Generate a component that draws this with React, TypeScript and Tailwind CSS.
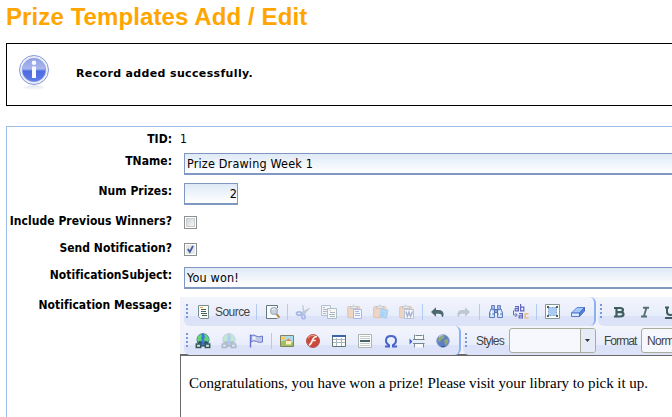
import React from "react";

type KidProps = { children?: React.ReactNode; className?: string };

function Icon({ children, className = "" }: KidProps) {
  return (
    <svg viewBox="0 0 16 16" width="16" height="16" fill="none" className={"block shrink-0 " + className}>
      {children}
    </svg>
  );
}

function Sep({ className = "" }: { className?: string }) {
  return <span className={"block h-4 w-px shrink-0 bg-[#b1cbf3] " + className} />;
}

function Grip({ className = "" }: { className?: string }) {
  return (
    <svg viewBox="0 0 2 15" width="2" height="15" shapeRendering="crispEdges" className={"block shrink-0 " + className}>
      {[0, 4, 8, 12].map((y) => (
        <rect key={y} x="0" y={y} width="2" height="2" fill="#7b98dc" />
      ))}
    </svg>
  );
}

function Source({ className }: KidProps) {
  return (
    <Icon className={className}>
      <path d="M2.5 1.5h10v13h-8l-2-2z" fill="#fdfdf8" stroke="#789094" />
      <path d="M4 3.5h3" stroke="#f0a648" />
      <path d="M5 5.5h5M5 7.5h5M5 9.5h6M6 11.5h5" stroke="#45605f" />
    </Icon>
  );
}

function Preview({ className }: KidProps) {
  return (
    <Icon className={className}>
      <path d="M12.5 4V1.5h-11v13h11" fill="#f9fbff" stroke="#64777c" />
      <circle cx="9" cy="7" r="3.4" fill="#c8d2df" stroke="#a3b3bf" strokeWidth="1.2" />
      <path d="M7 6q1-2 3-1" stroke="#f8fbff" />
      <path d="m11.5 10 3 3.6" stroke="#b78a50" strokeWidth="2" />
    </Icon>
  );
}

function Cut({ className }: KidProps) {
  return (
    <Icon className={className}>
      <path d="M7.8 1 8 8l2 2 1-1.4L9 7.5zM14.5 4l-7 4-1.6 2 2 .4 5-4z" fill="#c4cdd9" stroke="#bac4d2" strokeWidth=".6" />
      <ellipse cx="4" cy="9.5" rx="2.5" ry="1.7" stroke="#a5b7e8" strokeWidth="1.7" />
      <ellipse cx="8.5" cy="12.8" rx="1.6" ry="2" stroke="#a5b7e8" strokeWidth="1.6" />
    </Icon>
  );
}

function Copy({ className }: KidProps) {
  return (
    <Icon className={className}>
      <path d="M.5 1.5h9v10h-9z" fill="#f3f5fa" stroke="#b6c0ca" />
      <path d="M2 3.5h2M2 5.5h4M2 7.5h4M2 9.5h3" stroke="#aebbc5" />
      <path d="M6.5 4.5h9v10h-9z" fill="#f7f8fa" stroke="#b0bec7" />
      <path d="M8 6.5h2" stroke="#edcba1" />
      <path d="M9 8.5h5M8 10.5h6M9 12.5h5" stroke="#aab8c1" />
    </Icon>
  );
}

function Clipboard() {
  return (
    <>
      <rect x=".7" y="2.7" width="12" height="11" rx="1" fill="#eed6c3" stroke="#dec3ae" />
      <path d="M3.5 4.5v-2h2l1-1.5 2 1.5h2v2z" fill="#e5e5e6" stroke="#bcc1c8" strokeWidth=".8" />
    </>
  );
}

function Paste({ className }: KidProps) {
  return (
    <Icon className={className}>
      <Clipboard />
      <path d="M6.5 5.5h8v9h-8z" fill="#f5f7ff" stroke="#aab7e6" />
      <path d="M8 7.5h4M8 9.5h5M8 11.5h5" stroke="#a9b8e5" />
    </Icon>
  );
}

function PasteText({ className }: KidProps) {
  return (
    <Icon className={className}>
      <Clipboard />
      <path d="m8 5 7 1-1.5 8.5-7-2z" fill="#a9d2f3" stroke="#b5d5f1" />
      <path d="m8.5 7 4 .5-1 5" stroke="#c0e0f8" />
    </Icon>
  );
}

function PasteWord({ className }: KidProps) {
  return (
    <Icon className={className}>
      <Clipboard />
      <path d="M5.5 5.5h9v9h-9z" fill="#f6f8fc" stroke="#b6c2d6" />
      <path d="m7 7.5 1.4 5L10 8l1.6 4.5 1.9-5" stroke="#a6b5d1" strokeWidth="1.4" />
    </Icon>
  );
}

function Arrow({ className, flip = false }: KidProps & { flip?: boolean }) {
  return (
    <Icon className={className}>
      <g transform={flip ? "translate(16 0) scale(-1 1)" : undefined} fill={flip ? "#bdc8d5" : "#4d6870"}>
        <path d="M2 8 7 3.2V6h2.5C13 6 14.6 8 14.6 10.500 14.600 12 14 13 13 13.300 13 10.800 12 9.800 9.500 9.800H7v2.900z" />
      </g>
    </Icon>
  );
}

function Find({ className }: KidProps) {
  return (
    <Icon className={className}>
      <path d="M3.5 1.5h3v4h-3zM9.5 1.5h3v4h-3z" fill="#9cbaf0" stroke="#6c83bd" />
      <path d="m3 5-1.5 4v4.500h5V6zM13 5l1.5 4v4.500h-5V6z" fill="#d4e4fc" stroke="#5b7cc0" />
      <path d="M6.5 5.500h3v3h-3zM2 10h4m4 0h4" fill="#87a5df" stroke="#5570b0" />
      <path d="M3.500 7v4M11.500 7v4" stroke="#f8fcff" strokeWidth="1.3" />
    </Icon>
  );
}

function Replace({ className }: KidProps) {
  return (
    <svg viewBox="0 0 18 16" width="18" height="16" className={"block shrink-0 " + className}>
      <g fill="none" strokeWidth="1.200">
        <path d="M3 2.600h3.400v4.900M6.400 4.700H3.200v2.200h3.200M8.600 0v6.900h3.200V3.200H8.600" stroke="#6265be" />
        <path d="M7 9.600h3.400v5M10.400 11.800H7.200v2.200h3.200" stroke="#6265be" />
        <path d="M16.500 9.800h-3.400V14h3.400" stroke="#edae51" />
        <path d="M1.500 6.500V11h3.200M3.300 9l2 2-2 2" stroke="#5b6fc1" strokeWidth="1" />
      </g>
    </svg>
  );
}

function SelectAll({ className }: KidProps) {
  return (
    <Icon className={className}>
      <path d="M.5.5h14v14H.5z" fill="#fbfcf8" stroke="#849796" />
      <path d="M3.500 3.500h8v8h-8z" fill="#a9cbf5" stroke="#82a4d2" strokeDasharray="2 1" />
      <path d="M2 2h2v2H2zM11 2h2v2h-2zM2 11h2v2H2zM11 11h2v2h-2z" fill="#47636a" />
    </Icon>
  );
}

function Eraser({ className }: KidProps) {
  return (
    <Icon className={className}>
      <path d="M1.500 9 7 3.500h7.500L9.500 9z" fill="#a5c7fa" stroke="#5a83da" />
      <path d="M1.500 9h8v3.500h-8z" fill="#dcecff" stroke="#5679cd" />
      <path d="m9.500 9 5-5.500V7l-5 5.500z" fill="#5583dd" stroke="#4269c0" />
    </Icon>
  );
}

function LinkGlobe({ className }: KidProps) {
  return (
    <Icon className={className}>
      <circle cx="8" cy="6.700" r="6" fill="#3d78df" stroke="#4269a8" />
      <path d="M3 3.200 6 1l1 2-1 2 1 2-3 3-2-3zM9 1l3 1 2 4-1 4-3-1-1-3 1-2z" fill="#62d66f" />
      <path d="M1.300 11h4.400v3.500H1.300zM10.300 11h4.400v3.500h-4.400z" fill="#d6e4de" stroke="#34575c" strokeWidth="1.500" />
      <path d="M5 12.800h6M3 10l2-1.300 2 1.800M9 10.500l2-1.800 2 1.300" stroke="#34575c" strokeWidth="1.500" />
    </Icon>
  );
}

function Flag({ className }: KidProps) {
  return (
    <Icon className={className}>
      <path d="M1.500 1.500v13" stroke="#6670cc" strokeWidth="1.400" />
      <path d="M2 2.500q3-1.200 5 .5t6.500 0v6Q10 10 7.500 8.500T2 8.800z" fill="#c1cce8" stroke="#6a78cb" />
      <path d="M3.500 4q2-1 3 0v3q-1-1-3 0" fill="#edf1fa" />
    </Icon>
  );
}

function Picture({ className }: KidProps) {
  return (
    <Icon className={className}>
      <path d="M1.500 2.500h13v11h-13z" fill="#a8def0" stroke="#857f68" />
      <path d="M2 9q3-3 7 0t5-1v5H2z" fill="#9ec25b" />
      <path d="M2.500 3.500h4v3h-4z" fill="#f6ce57" />
      <path d="M7 8h5v3.500H7z" fill="#fff0c2" />
      <path d="m6 8 3.500-2.500L13 8z" fill="#dd8a52" />
    </Icon>
  );
}

function Flash({ className }: KidProps) {
  return (
    <Icon className={className}>
      <circle cx="8" cy="8" r="6.500" fill="#c9493d" stroke="#b55551" />
      <path d="M3 5q3-4 7-2" stroke="#e98a7d" strokeWidth="1.500" />
      <path d="M12 3.500c-3 0-4 2-4.800 4.200C6.400 10 6 11.500 4 12M7.400 7.500h3.300" stroke="#fff6eb" strokeWidth="1.700" />
    </Icon>
  );
}

function Table({ className }: KidProps) {
  return (
    <Icon className={className}>
      <path d="M1.500 2.500h13v11h-13z" fill="#fdfdfb" stroke="#5f7474" />
      <path d="M1 3h14" stroke="#3b65a6" strokeWidth="2" />
      <path d="M2 6.500h12M2 9.500h12M5.500 5v8M10.500 5v8" stroke="#aab7b8" />
    </Icon>
  );
}

function Rule({ className }: KidProps) {
  return (
    <Icon className={className}>
      <path d="M1.500 1.500h13v13h-13z" fill="#fcfcfb" stroke="#adb4b5" />
      <path d="M3 3.500h10M3 5.500h10M3 10.500h10M3 12.500h10" stroke="#c5caca" />
      <path d="M3 8h10" stroke="#45616a" strokeWidth="2" />
    </Icon>
  );
}

function Omega({ className }: KidProps) {
  return (
    <Icon className={className}>
      <path d="M2 13.500h4V12C1.500 9.500 2 3 8 3s6.500 6.500 2 9v1.500h4" stroke="#4864cb" strokeWidth="2" />
    </Icon>
  );
}

function PageBreak({ className }: KidProps) {
  return (
    <Icon className={className}>
      <path d="M5.500 1.500v5h9v-5M5.500 14.500v-4h9v4" fill="#f8fafa" stroke="#7b8f93" />
      <path d="M4 6.500h11.500M4 10.500h11.500M6.500 2.500h7" stroke="#71868a" strokeWidth="1" />
      <path d="m.5 5.500 3 3-3 3z" fill="#4263d2" />
    </Icon>
  );
}

function Globe({ className }: KidProps) {
  return (
    <Icon className={className}>
      <circle cx="8" cy="8" r="6.200" fill="#5c7fc4" stroke="#8097c0" />
      <path d="M3.500 4.500 6 2.300l3.500.7L8.800 5.500 6 6.800l-1 2.500-1.700-.8zM10 6.500l2.500-.5.8 3-2.300 3.200-1.700-1.700.8-1.500-1.600-1z" fill="#8fa877" />
      <path d="M4 4q2-2 4-2" stroke="#b9cbe3" />
      <path d="M6 13.500h4" stroke="#3b5796" />
    </Icon>
  );
}

function Info() {
  return (
    <svg viewBox="0 0 32 38" width="32" height="38" className="block shrink-0">
      <defs>
        <linearGradient id="ball" x1="0" y1="0" x2="0" y2="1">
          <stop stopColor="#8f9fe6" />
          <stop offset=".45" stopColor="#a9b6ee" />
          <stop offset=".55" stopColor="#4c6ade" />
          <stop offset="1" stopColor="#5f7cec" />
        </linearGradient>
        <linearGradient id="fade" x1="0" y1="0" x2="0" y2="1">
          <stop stopColor="#c3c9e0" />
          <stop offset="1" stopColor="#fff" />
        </linearGradient>
      </defs>
      <path d="M5 33.500q11-5 22 0-4 2-8 3h-6q-5-1-8-3" fill="url(#fade)" opacity=".5" />
      <circle cx="16" cy="16" r="14.500" fill="#eef0f4" stroke="#8498df" />
      <circle cx="16" cy="16" r="11.800" fill="url(#ball)" stroke="#8d9fe6" strokeWidth=".7" />
      <circle cx="16" cy="8.800" r="2.300" fill="#f8faff" />
      <path d="M14 12.500h4V24h-4z" fill="#f8faff" />
    </svg>
  );
}

function Bar({ children, className = "" }: KidProps) {
  return (
    <div className={"flex h-[29px] shrink-0 items-center rounded-bl-md bg-linear-to-b from-[#f3f5fc] from-0% via-[#e8edfb] via-64% to-[#dce3f8] to-66% " + className}>
      {children}
    </div>
  );
}

function Row({ label, className, children }: { label: string; className: string; children: React.ReactNode }) {
  return (
    <div className={"flex items-start " + className}>
      <div className="flex h-[18px] w-[165px] shrink-0 items-center justify-end whitespace-nowrap font-['DejaVu_Sans_Condensed','DejaVu_Sans',sans-serif] text-[12px] font-bold tracking-[0.04px] [font-stretch:condensed]">
        {label}
      </div>
      {children}
    </div>
  );
}

const field =
  "ml-3 flex h-[22px] shrink-0 items-center border border-b-2 border-[#7f98c1] bg-linear-to-b from-[#dfeaf6] to-white pl-[2px] pt-px font-['DejaVu_Sans_Condensed','DejaVu_Sans',sans-serif] text-[12.5px] tracking-[0.18px] [font-stretch:condensed]";

export default function App() {
  return (
    <div className="h-[417px] w-[672px] overflow-hidden bg-white pl-1.5 text-black">
      <h1 className="h-[43px] whitespace-nowrap pt-[3px] font-['Liberation_Sans',Arial,sans-serif] text-[24px] font-bold leading-[28px] tracking-[0.1px] text-[#ffa500]">
        Prize Templates Add / Edit
      </h1>
      <div className="flex h-[63px] w-[700px] border border-black pl-[11px] pt-[10px]">
        <Info />
        <span className="ml-[26px] mt-[12px] font-['DejaVu_Sans',Verdana,sans-serif] text-[11px] font-bold leading-4 tracking-[0.35px]">
          Record added successfully.
        </span>
      </div>

      <div className="mt-5 h-[300px] w-[700px] border border-[#9dbce7] pt-[3px]">
        <Row label="TID:" className="h-[22px]">
          <span className="ml-[8px] font-['DejaVu_Sans_Condensed','DejaVu_Sans',sans-serif] text-[12px] leading-[18px] [font-stretch:condensed]">1</span>
        </Row>
        <Row label="TName:" className="h-[30px]">
          <div className={field + " mt-[1px] w-[520px]"}>Prize Drawing Week 1</div>
        </Row>
        <Row label="Num Prizes:" className="h-[30px]">
          <div className={field + " mt-[1px] w-[54px] justify-end"}>2</div>
        </Row>
        <Row label="Include Previous Winners?" className="h-[27px]">
          <span className="ml-3 mt-[4px] block size-[13px] border border-[#8e8f8f] bg-white p-px">
            <span className="block size-[9px] border border-[#c8cbd0] bg-linear-to-br from-[#d0d3d8] to-[#f6f6f6]" />
          </span>
        </Row>
        <Row label="Send Notification?" className="h-[27px]">
          <span className="ml-3 mt-[4px] block size-[13px] border border-[#8e8f8f] bg-white p-px">
            <svg viewBox="0 0 9 9" width="9" height="9" className="block bg-[#e4e7eb]">
              <path d="m1.800 4 2 3L7 1" fill="none" stroke="#465b9b" strokeWidth="1.800" />
            </svg>
          </span>
        </Row>
        <Row label="NotificationSubject:" className="h-[30px]">
          <div className={field + " mt-[1px] w-[520px]"}>You won!</div>
        </Row>
        <Row label="Notification Message:" className="">
          <div className="ml-[8px] mt-px w-[520px] shrink-0 bg-[#f2f3fa] font-['Liberation_Sans',Arial,sans-serif] text-[12px] text-[#434343]">
            <div className="flex h-[29px] pl-1">
              <Bar className="w-[412px] rounded-r-md border-r-2 border-[#8cb0f5]">
                <Grip className="ml-[2px]" />
                <Source className="ml-[8px]" />
                <span className="ml-[3px] w-[34px] whitespace-nowrap text-[12px] tracking-[-0.55px]">Source</span>
                <Sep className="ml-[7px]" />
                <Preview className="ml-[8px]" />
                <Sep className="ml-[6px]" />
                <Cut className="ml-[7px]" />
                <Copy className="ml-[10px]" />
                <Paste className="ml-[10px]" />
                <PasteText className="ml-[10px]" />
                <PasteWord className="ml-[10px]" />
                <Sep className="ml-[7px]" />
                <Arrow className="ml-[6px]" />
                <Arrow flip className="ml-[11px]" />
                <Sep className="ml-[7px]" />
                <Find className="ml-[8px]" />
                <Replace className="ml-[8px]" />
                <Sep className="ml-[6px]" />
                <SelectAll className="ml-[8px]" />
                <Eraser className="ml-[9px]" />
              </Bar>
              <Bar className="ml-[2px] w-[100px]">
                <Grip className="ml-[2px]" />
                <Icon className="ml-[9px]">
                  <path d="M3 4h6q3 0 3 2T9 8.200q3.500 0 3.500 2.100T9 12.500H3M5.500 4v8.500M5 8.200h4" stroke="#3f5e61" strokeWidth="2.200" />
                </Icon>
                <Icon className="ml-[10px]">
                  <path d="M6 3.800h6M4 12.500h6M9.400 4 6.800 12.500" stroke="#56706f" strokeWidth="1.900" />
                </Icon>
                <Icon className="ml-[10px]">
                  <path d="M2 3.500h4M9 3.500h4M4 3v5q0 3 3.500 3T11 8V3M2 14h12" stroke="#3f5e61" strokeWidth="2" />
                </Icon>
              </Bar>
            </div>
            <div className="flex h-[28px] pl-1">
              <Bar className="h-[28px] w-[277px] rounded-r-md border-r-2 border-[#8cb0f5]">
                <Grip className="ml-[2px]" />
                <LinkGlobe className="ml-[7px]" />
                <LinkGlobe className="ml-[10px] opacity-30" />
                <Flag className="ml-[12px]" />
                <Sep className="ml-[6px]" />
                <Picture className="ml-[7px]" />
                <Flash className="ml-[10px]" />
                <Table className="ml-[10px]" />
                <Rule className="ml-[10px]" />
                <Omega className="ml-[10px]" />
                <PageBreak className="ml-[10px]" />
                <Globe className="ml-[10px]" />
              </Bar>
              <Bar className="ml-[2px] h-[28px] w-[240px]">
                <Grip className="ml-[2px]" />
                <span className="ml-[9px] w-[28px] whitespace-nowrap tracking-[-0.8px]">Styles</span>
                <span className="ml-[5px] flex h-[25px] w-[87px] shrink-0 overflow-hidden rounded-[3px] border border-[#a9ab9b] bg-[#f6f8fd]">
                  <span className="ml-auto flex w-[15px] items-center justify-center border-l border-[#a9ab9b] bg-[#e6ebf8]">
                    <svg viewBox="0 0 5 3" width="5" height="3"><path d="M0 0h5L2.500 3z" fill="#333" /></svg>
                  </span>
                </span>
                <span className="ml-[8px] w-[32px] whitespace-nowrap tracking-[-0.9px]">Format</span>
                <span className="ml-[5px] flex h-[25px] w-[90px] shrink-0 items-center rounded-[3px] border border-[#a9ab9b] bg-[#f6f8fd] pl-[5px] tracking-[-0.6px]">Norm</span>
              </Bar>
            </div>
            <div className="h-[90px] whitespace-nowrap border-l border-t-2 border-[#696969] bg-white pl-[8px] pt-[18px] font-['Liberation_Serif','Times_New_Roman',serif] text-[15px] leading-[18px] tracking-[-0.05px] text-black">
              Congratulations, you have won a prize! Please visit your library to pick it up.
            </div>
          </div>
        </Row>
      </div>
    </div>
  );
}
